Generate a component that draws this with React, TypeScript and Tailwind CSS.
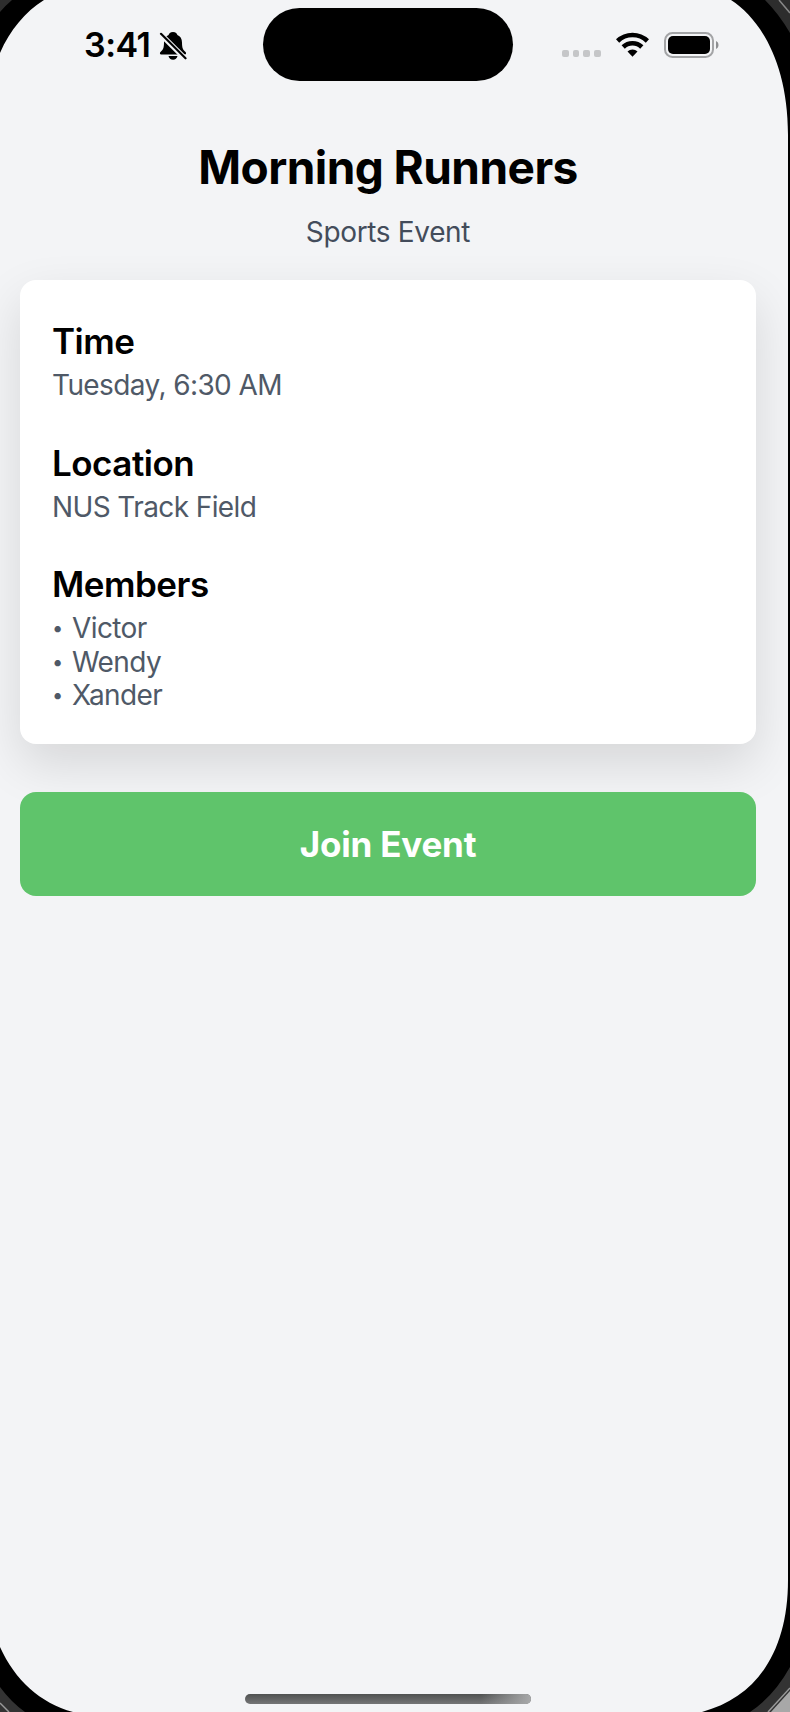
type DetailProps = {
  label: string;
  children: React.ReactNode;
};

const members = ['Victor', 'Wendy', 'Xander'];

function MutedBellIcon() {
  return (
    <svg width="28" height="30" viewBox="0 0 28 30" className="mt-px ml-[9px]">
      <path
        d="M14 1c-2.800 0-4.100 1.600-4.400 3.100C6.500 5.300 5 8 5 11.500c0 5.500-1 7.500-3.300 9.300-1.100.9-1.100 2.700.5 2.700h23.600c1.600 0 1.600-1.800.5-2.700C24 19 23 17 23 11.500c0-3.500-1.500-6.200-4.600-7.400C18.100 2.600 16.800 1 14 1z"
        fill="black"
      />
      <path d="M9.500 25h9c-.5 2.300-2.200 3.700-4.500 3.700S10 27.300 9.500 25z" fill="black" />
      <path d="M0 1.500L27 28.500" stroke="#f3f4f6" strokeWidth="5.200" />
      <path d="M2 2.800L26.500 27.300" stroke="black" strokeWidth="2.200" strokeLinecap="round" />
    </svg>
  );
}

function WifiIcon() {
  return (
    <svg width="33" height="25" viewBox="0 0 33 25">
      <g fill="none" stroke="black" strokeWidth="4.600">
        <path d="M1.600 9a21.400 21.400 0 0 1 29.800 0" />
        <path d="M7.200 15a13.300 13.300 0 0 1 18.600 0" />
      </g>
      <path d="M16.500 24.700l-5-5.100a7.300 7.300 0 0 1 10 0z" fill="black" />
    </svg>
  );
}

function BatteryIcon() {
  return (
    <svg width="56" height="26" viewBox="0 0 56 26">
      <rect x="1" y="1" width="48" height="24" rx="7.500" fill="none" stroke="#a3a4a6" strokeWidth="2" />
      <rect x="4" y="4" width="42" height="18" rx="5" fill="black" />
      <path d="M52 9c3.300 1.200 3.300 6.800 0 8z" fill="#8e8f91" />
    </svg>
  );
}

function StatusBar() {
  return (
    <div className="flex h-[90px] items-start">
      <div className="flex w-[263px] items-center pt-[28px] pl-[84px]">
        <span className="text-[34px] leading-[34px] font-semibold tracking-[-0.5px]">3:41</span>
        <MutedBellIcon />
      </div>
      <div className="mt-[8px] h-[73px] w-[250px] rounded-full bg-black" />
      <div className="flex items-start pt-[32px] pl-[49px]">
        <div className="mt-[18px] flex gap-[4px]">
          {[0, 1, 2, 3].map((dot) => (
            <div key={dot} className="h-[7px] w-[6.670px] rounded-[2px] bg-[#c5c6c8]" />
          ))}
        </div>
        <div className="ml-[15px]">
          <WifiIcon />
        </div>
        <div className="ml-[15px]">
          <BatteryIcon />
        </div>
      </div>
    </div>
  );
}

function Detail({ label, children }: DetailProps) {
  return (
    <div>
      <h2 className="text-[35px] leading-[50px] font-semibold tracking-[-0.5px]">{label}</h2>
      <div className="mt-[2px] text-[28px] leading-[34px] tracking-[-0.6px] text-[#4f5967]">
        {children}
      </div>
    </div>
  );
}

function DeviceFrame() {
  return (
    <svg
      className="pointer-events-none absolute inset-0"
      width="790"
      height="1712"
      viewBox="0 0 790 1712"
      fill="none"
    >
      <path d="M731 0C760 19 788 62 788 135V1580C788 1650 758 1697 702 1712H790V0z" fill="black" />
      <path d="M44 0C25 12 10 30 0 53V0z" fill="black" />
      <path d="M0 1647C15 1680 40 1703 73 1712H0z" fill="black" />
      <path d="M765 0Q779 14 790 33V0z" fill="#2d2d2d" />
      <path d="M779 0L790 13" stroke="#888888" strokeWidth="1.500" />
      <path d="M12 0Q6 5 0 12V0z" fill="#2d2d2d" />
      <path d="M750 1712Q774 1696 790 1667V1712z" fill="#333333" />
      <path d="M771 1712L790 1691V1712z" fill="#a8a8a8" />
      <path d="M768 1712L790 1688" stroke="#999999" strokeWidth="1.500" />
      <path d="M0 1687Q11 1702 25 1712H0z" fill="#333333" />
      <path d="M0 1703L9 1712" stroke="#999999" strokeWidth="1.500" />
    </svg>
  );
}

function HomeIndicator() {
  return (
    <div className="mt-auto mb-[8px] ml-[245px] flex h-[10px] w-[286px] justify-end overflow-hidden rounded-full bg-linear-to-b from-[#505252] to-[#747576]">
      <div className="h-full w-[50px] bg-linear-to-r from-transparent to-[#a8a9aa]" />
    </div>
  );
}

export default function App() {
  return (
    <div className="relative h-[1712px] w-[790px] overflow-hidden bg-gray-100 font-[Inter,'Liberation_Sans',sans-serif] text-black">
      <div className="flex h-full flex-col">
        <StatusBar />
        <main className="w-[776px] px-[20px] pt-[45px]">
          <h1 className="text-center text-[46px] leading-[64px] font-bold tracking-[-0.55px]">
            Morning Runners
          </h1>
          <p className="mt-[15px] text-center text-[28px] leading-[36px] tracking-[-0.35px] text-[#434c5b]">
            Sports Event
          </p>
          <section className="mt-[30px] flex h-[464px] flex-col gap-[35.5px] rounded-[16px] bg-white px-[32px] pt-[36px] shadow-[0_20px_50px_rgba(0,0,0,0.12)]">
            <Detail label="Time">Tuesday, 6:30 AM</Detail>
            <Detail label="Location">NUS Track Field</Detail>
            <Detail label="Members">
              <ul>
                {members.map((member) => (
                  <li key={member} className="flex h-[33.7px]">
                    <span className="w-[20px] text-[20px] leading-[35px]">•</span>
                    {member}
                  </li>
                ))}
              </ul>
            </Detail>
          </section>
          <button className="mt-[48px] h-[104px] w-full rounded-[16px] bg-[#5fc46b] text-[35px] font-bold tracking-[-0.2px] text-white">
            Join Event
          </button>
        </main>
        <HomeIndicator />
      </div>
      <DeviceFrame />
    </div>
  );
}
